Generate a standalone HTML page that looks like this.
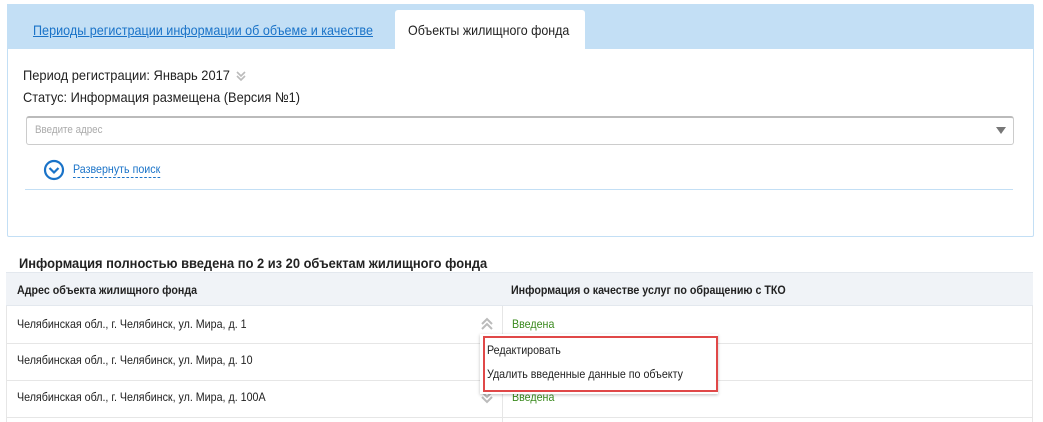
<!DOCTYPE html>
<html><head><meta charset="utf-8"><style>
body{margin:0;width:1043px;height:422px;background:#fff;font-family:"Liberation Sans",sans-serif;color:#222;position:relative;overflow:hidden}
.a{position:absolute}
.t{transform:scaleX(0.89);transform-origin:0 0;white-space:nowrap}
</style></head><body>
<div class="a" style="left:7px;top:4px;width:1025px;height:231px;border:1px solid #c3dff5;border-radius:2px"></div>
<div class="a" style="left:7px;top:4px;width:1026px;height:45px;background:#c3dff5"></div>
<div class="a" style="left:395px;top:10px;width:190px;height:39px;background:#fff;border-radius:3px 3px 0 0"></div>
<div class="a t" style="left:33px;top:22px;font-size:14px;color:#1a73c8;text-decoration:underline;transform:scaleX(0.9)">Периоды регистрации информации об объеме и качестве</div>
<div class="a t" style="left:408px;top:22px;font-size:14px;color:#222">Объекты жилищного фонда</div>
<div class="a t" style="left:23px;top:67px;font-size:14px;transform:scaleX(0.92)">Период регистрации: Январь 2017</div>
<svg class="a" style="left:235px;top:70px" width="12" height="12"><path d="M2 2l4 4 4-4M2 6l4 4 4-4" fill="none" stroke="#bbb" stroke-width="1.6"/></svg>
<div class="a t" style="left:23px;top:89px;font-size:14px;transform:scaleX(0.915)">Статус: Информация размещена (Версия №1)</div>
<div class="a" style="left:26px;top:116px;width:988px;height:29px;border:1px solid #ccc;border-top:2px solid #bbb;border-radius:3px;box-sizing:border-box"></div>
<div class="a t" style="left:35px;top:124px;font-size:11px;color:#aaa">Введите адрес</div>
<div class="a" style="left:996px;top:127px;width:0;height:0;border-left:5px solid transparent;border-right:5px solid transparent;border-top:7px solid #777"></div>
<svg class="a" style="left:43px;top:159px" width="22" height="22"><circle cx="11" cy="11" r="9" fill="none" stroke="#1a73c8" stroke-width="2.2"/><path d="M6.5 9l4.5 4.5 4.5-4.5" fill="none" stroke="#1a73c8" stroke-width="2.2"/></svg>
<div class="a t" style="left:73px;top:162px;font-size:12px;color:#1a73c8;border-bottom:1px dashed #1a73c8;line-height:15px">Развернуть поиск</div>
<div class="a" style="left:25px;top:189px;width:988px;height:1px;background:#c3dff5"></div>
<div class="a t" style="left:19px;top:255px;font-size:14px;font-weight:bold;color:#222;transform:scaleX(0.92)">Информация полностью введена по 2 из 20 объектам жилищного фонда</div>
<div class="a" style="left:6px;top:272px;width:1027px;height:34px;background:#f0f3f7;border-top:1px solid #e3e8ee;border-bottom:1px solid #e3e8ee;box-sizing:border-box"></div>
<div class="a t" style="left:17px;top:283px;font-size:12px;font-weight:bold">Адрес объекта жилищного фонда</div>
<div class="a t" style="left:511px;top:283px;font-size:12px;font-weight:bold">Информация о качестве услуг по обращению с ТКО</div>
<div class="a" style="left:502px;top:306px;width:1px;height:116px;background:#e6e6e6"></div>
<div class="a" style="left:6px;top:343px;width:1027px;height:1px;background:#e6e6e6"></div>
<div class="a" style="left:6px;top:380px;width:1027px;height:1px;background:#e6e6e6"></div>
<div class="a" style="left:6px;top:417px;width:1027px;height:1px;background:#e6e6e6"></div>
<div class="a" style="left:6px;top:306px;width:1px;height:116px;background:#e6e6e6"></div>
<div class="a" style="left:1032px;top:306px;width:1px;height:116px;background:#e6e6e6"></div>
<div class="a t" style="left:17px;top:317px;font-size:12px">Челябинская обл., г. Челябинск, ул. Мира, д. 1</div>
<div class="a t" style="left:17px;top:353px;font-size:12px">Челябинская обл., г. Челябинск, ул. Мира, д. 10</div>
<div class="a t" style="left:17px;top:390px;font-size:12px">Челябинская обл., г. Челябинск, ул. Мира, д. 100А</div>
<div class="a t" style="left:512px;top:317px;font-size:12px;color:#3a8a1e">Введена</div>
<div class="a t" style="left:512px;top:390px;font-size:12px;color:#3a8a1e">Введена</div>
<svg class="a" style="left:480px;top:317px" width="14" height="14"><path d="M2 7l5-5 5 5M2 12l5-5 5 5" fill="none" stroke="#bbb" stroke-width="2"/></svg>
<svg class="a" style="left:480px;top:390px" width="14" height="14"><path d="M2 2l5 5 5-5M2 7l5 5 5-5" fill="none" stroke="#bbb" stroke-width="2"/></svg>
<div class="a" style="left:480px;top:334px;width:238px;height:60px;background:#fff;box-shadow:0 1px 3px rgba(0,0,0,.25)"></div>
<div class="a" style="left:483px;top:336px;width:231px;height:52px;border:2px solid #e04848"></div>
<div class="a t" style="left:487px;top:343px;font-size:12px">Редактировать</div>
<div class="a t" style="left:487px;top:367px;font-size:12px">Удалить введенные данные по объекту</div>
</body></html>
